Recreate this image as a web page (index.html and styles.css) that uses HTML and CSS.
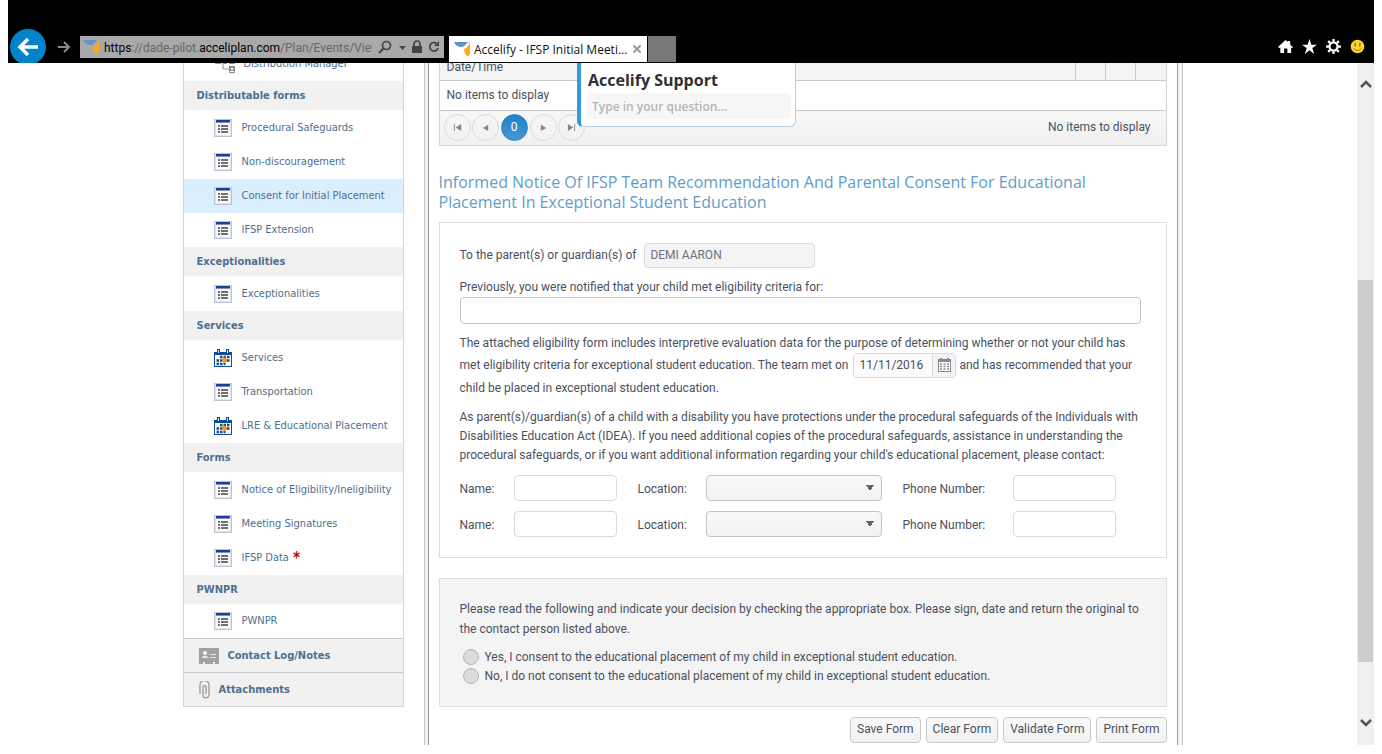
FILE: index.html
```html
<!DOCTYPE html>
<html lang="en">
<head>
<meta charset="utf-8">
<title>Accelify - IFSP Initial Meeting</title>
<link rel="stylesheet" href="styles.css">
</head>
<body>
<svg class="defs" aria-hidden="true">
  <symbol id="form" viewBox="0 0 18 18">
    <rect x=".5" y=".5" width="17" height="17" fill="#dfe4ef" stroke="#bcc4d6"/>
    <rect x="2" y="4" width="14" height="12" fill="#fbfbfb"/>
    <rect x="2" y="1" width="14" height="2.500" fill="#1b3f94"/>
    <path d="M4 7h2M4 10h2M4 13h2M7 7h7M7 10h7M7 13h7" stroke="#444" stroke-width="1.300"/>
  </symbol>
  <symbol id="cal" viewBox="0 0 18 18">
    <path d="M0 3h18v15H0z" fill="#0f4c91"/>
    <path d="M3 0h3v4H3zM12 0h3v4h-3z" fill="#0f4c91"/>
    <path d="M4 1h1v3H4zM13 1h1v3h-1z" fill="#cfe0f2"/>
    <path d="M1 6h16v11H1z" fill="#fff"/>
    <path d="M6 8h9.500M2.500 11.500h13M2.500 15h9" stroke="#0f4c91" stroke-width="2.400" stroke-dasharray="2.500 1"/>
    <circle cx="10.500" cy="11" r="2.600" fill="#f7941e"/>
  </symbol>
  <symbol id="brand" viewBox="0 0 16 16">
    <path d="M0 1h15c-3 1-3 4-7 5C4 6 1 4 0 1z" fill="#6495c8"/>
    <path d="M16 0v12c0 3-3 4-4 2-1-2-2-3-2-6 3-1 5-4 6-8z" fill="#fbab1f"/>
  </symbol>
</svg>
<div class="window">
  <header class="chrome">
    <button class="back" aria-label="Back"><svg viewBox="0 0 36 36"><circle cx="18" cy="18" r="18" fill="#0083c9"/><path d="M28 18H11M18 10l-8 8 8 8" fill="none" stroke="#fff" stroke-width="3.500"/></svg></button>
    <button class="forward" aria-label="Forward"><svg viewBox="0 0 14 12"><path d="M1 6h11M7 1l5 5-5 5" fill="none" stroke="#8b8b8b" stroke-width="2"/></svg></button>
    <div class="address">
      <svg class="fav" viewBox="0 0 16 16"><use href="#brand"/></svg>
      <span class="url"><b>https</b>://dade-pilot.<b>acceliplan.com</b>/Plan/Events/View</span>
      <button aria-label="Search"><svg width="14" height="14" viewBox="0 0 14 14"><circle cx="8.500" cy="5.500" r="4" fill="none" stroke="#444" stroke-width="1.700"/><path d="M5.500 8.500L1 13" stroke="#444" stroke-width="2.200"/></svg></button>
      <button aria-label="Show list"><svg width="8" height="14" viewBox="0 0 8 14"><path d="M1 6h7L4.500 10z" fill="#444"/></svg></button>
      <button aria-label="Security report"><svg width="10" height="14" viewBox="0 0 10 14"><path d="M0 6h10v7H0z" fill="#444"/><path d="M2 6V4a3 3 0 0 1 6 0v2" fill="none" stroke="#444" stroke-width="1.700"/></svg></button>
      <button aria-label="Refresh"><svg width="12" height="14" viewBox="0 0 12 14"><path d="M8.500 3.500A4.200 4.200 0 1 0 10 8" fill="none" stroke="#444" stroke-width="1.800"/><path d="M11 1v5H6z" fill="#444"/></svg></button>
    </div>
    <div class="tab">
      <svg class="fav" viewBox="0 0 16 16"><use href="#brand"/></svg>
      <span>Accelify - IFSP Initial Meeti...</span>
      <button aria-label="Close tab"><svg width="8" height="8" viewBox="0 0 8 8"><path d="M.5.5l7 7m0-7l-7 7" stroke="#9a9a9a" stroke-width="2"/></svg></button>
    </div>
    <button class="newtab" aria-label="New tab"></button>
    <div class="tools">
      <button aria-label="Home"><svg viewBox="0 0 16 16"><path d="M0 8.500L8 1l2.500 2.300V2H13v4l3 2.500-1 1L14 9v6h-4v-5H6.500v5H2.500V9L1 9.500z" fill="#fff"/></svg></button>
      <button aria-label="Favorites"><svg viewBox="0 0 16 16"><path d="M8 0l2 6h6l-5 3.700L13 16l-5-4-5 4 2-6.300L0 6h6z" fill="#fff"/></svg></button>
      <button aria-label="Tools"><svg viewBox="0 0 16 16"><circle cx="8" cy="8" r="4.300" fill="none" stroke="#fff" stroke-width="2.400"/><path d="M8 0v3M8 13v3M0 8h3M13 8h3M2.300 2.300l2 2M11.700 11.700l2 2M2.300 13.700l2-2M11.700 4.300l2-2" stroke="#fff" stroke-width="2.400"/></svg></button>
      <button aria-label="Send a smile"><svg viewBox="0 0 16 16"><circle cx="8" cy="8" r="7.300" fill="#fcd32f"/><path d="M5.500 4v4M10.500 4v4" stroke="#8a6d10" stroke-width="1.500"/><path d="M4 10c2 3 6 3 8 0" fill="none" stroke="#8a6d10"/></svg></button>
    </div>
  </header>

  <div class="viewport">
    <div class="page">
      <nav class="sidebar" aria-label="Plan sections">
        <a class="item cut" href="#"><svg class="org" viewBox="0 0 22 20"><path d="M4 7h8M9 7v8h6" fill="none" stroke="#999"/><path d="M1 4h6v6H1zM9 4h4v6H9zM15 4h6v6h-6zM15 12h6v7h-6z" fill="#8d8a8a"/><path d="M3 6h2v2H3zM17 6h2v2h-2zM17 14h2v2h-2zM16 17h4v1h-4z" fill="#fff"/></svg>Distribution Manager</a>
        <h2>Distributable forms</h2>
        <ul>
          <li><a class="item" href="#"><svg><use href="#form"/></svg>Procedural Safeguards</a></li>
          <li><a class="item" href="#"><svg><use href="#form"/></svg>Non-discouragement</a></li>
          <li><a class="item current" href="#"><svg><use href="#form"/></svg>Consent for Initial Placement</a></li>
          <li><a class="item" href="#"><svg><use href="#form"/></svg>IFSP Extension</a></li>
        </ul>
        <h2>Exceptionalities</h2>
        <ul>
          <li><a class="item" href="#"><svg><use href="#form"/></svg>Exceptionalities</a></li>
        </ul>
        <h2>Services</h2>
        <ul>
          <li><a class="item" href="#"><svg><use href="#cal"/></svg>Services</a></li>
          <li><a class="item" href="#"><svg><use href="#form"/></svg>Transportation</a></li>
          <li><a class="item" href="#"><svg><use href="#cal"/></svg>LRE &amp; Educational Placement</a></li>
        </ul>
        <h2>Forms</h2>
        <ul>
          <li><a class="item" href="#"><svg><use href="#form"/></svg>Notice of Eligibility/Ineligibility</a></li>
          <li><a class="item" href="#"><svg><use href="#form"/></svg>Meeting Signatures</a></li>
          <li><a class="item" href="#"><svg><use href="#form"/></svg>IFSP Data <span class="req">*</span></a></li>
        </ul>
        <h2>PWNPR</h2>
        <ul class="last">
          <li><a class="item" href="#"><svg><use href="#form"/></svg>PWNPR</a></li>
        </ul>
        <a class="section" href="#"><svg width="20" height="16" viewBox="0 0 20 16"><path d="M0 0h20v16h-4v-2h-2v2H6v-2H4v2H0z" fill="#a59f9f"/><circle cx="6" cy="5" r="2" fill="#fff"/><path d="M3 10c0-3 6-3 6 0zM11 6h6v1h-6zM11 9h6v1h-6z" fill="#e8e5e5"/></svg>Contact Log/Notes</a>
        <a class="section" href="#"><svg width="11" height="18" viewBox="0 0 11 18"><path d="M1 13V4a4 4 0 0 1 9 0v9c0 5-6 5-6 1V6c0-2 3-2 3 0v7" fill="none" stroke="#999" stroke-width="1.300"/></svg>Attachments</a>
      </nav>

      <main class="content">
        <div class="grid">
          <table>
            <thead><tr><th scope="col">Date/Time</th><th class="act"></th><th class="act"></th><th class="act"></th></tr></thead>
            <tbody><tr><td colspan="4">No items to display</td></tr></tbody>
          </table>
          <div class="pager">
            <button aria-label="First page"><svg viewBox="0 0 10 10"><path d="M1 1h1v8H1zM9 1v8L3 5z"/></svg></button>
            <button aria-label="Previous page"><svg viewBox="0 0 10 10"><path d="M8 2v7L2 5.500z"/></svg></button>
            <button class="on">0</button>
            <button aria-label="Next page"><svg viewBox="0 0 10 10"><path d="M2 2v7l6-3.500z"/></svg></button>
            <button aria-label="Last page"><svg viewBox="0 0 10 10"><path d="M8 1h1v8H8zM1 1v8l6-4z"/></svg></button>
            <span>No items to display</span>
          </div>
        </div>

        <h1>Informed Notice Of IFSP Team Recommendation And Parental Consent For Educational Placement In Exceptional Student Education</h1>

        <form>
          <section class="panel">
            <div class="line"><label for="child">To the parent(s) or guardian(s) of</label><input id="child" class="child" value="DEMI AARON" readonly></div>
            <label class="block" for="criteria">Previously, you were notified that your child met eligibility criteria for:</label>
            <input id="criteria" class="wide">
            <p class="team">The attached eligibility form includes interpretive evaluation data for the purpose of determining whether or not your child has<br>met eligibility criteria for exceptional student education. The team met on <span class="date"><input aria-label="Meeting date" value="11/11/2016"><button type="button" aria-label="Open calendar"><svg width="13" height="14" viewBox="0 0 13 14"><path d="M0 1h13v13H0z" fill="#858a96"/><path d="M2 0h2v2H2zM9 0h2v2H9z" fill="#858a96"/><path d="M1 4h11v9H1z" fill="#fff"/><path d="M2 6h9M2 8.500h9M2 11h9" stroke="#858a96" stroke-width="1.500" stroke-dasharray="2 1.500"/></svg></button></span> and has recommended that your<br>child be placed in exceptional student education.</p>
            <p class="rights">As parent(s)/guardian(s) of a child with a disability you have protections under the procedural safeguards of the Individuals with<br>Disabilities Education Act (IDEA). If you need additional copies of the procedural safeguards, assistance in understanding the<br>procedural safeguards, or if you want additional information regarding your child's educational placement, please contact:</p>
            <div class="contacts">
              <label for="n1">Name:</label><input id="n1"><label for="l1" class="gap">Location:</label><select id="l1"><option></option></select><label for="p1" class="gap">Phone Number:</label><input id="p1">
              <label for="n2">Name:</label><input id="n2"><label for="l2" class="gap">Location:</label><select id="l2"><option></option></select><label for="p2" class="gap">Phone Number:</label><input id="p2">
            </div>
          </section>

          <section class="panel decision">
            <p>Please read the following and indicate your decision by checking the appropriate box. Please sign, date and return the original to the contact person listed above.</p>
            <label><input type="radio" name="consent">Yes, I consent to the educational placement of my child in exceptional student education.</label>
            <label><input type="radio" name="consent">No, I do not consent to the educational placement of my child in exceptional student education.</label>
          </section>

          <div class="actions">
            <button type="button">Save Form</button>
            <button type="button">Clear Form</button>
            <button type="button">Validate Form</button>
            <button type="button">Print Form</button>
          </div>
        </form>
      </main>
    </div>

    <div class="scrollbar" aria-hidden="true">
      <svg viewBox="0 0 12 8"><path d="M1 7l5-5 5 5" fill="none" stroke="#555" stroke-width="2.500"/></svg>
      <div class="track"><div class="thumb"></div></div>
      <svg viewBox="0 0 12 8"><path d="M1 1l5 5 5-5" fill="none" stroke="#555" stroke-width="2.500"/></svg>
    </div>

    <aside class="support">
      <label for="ask">Accelify Support</label>
      <input id="ask" placeholder="Type in your question...">
    </aside>
  </div>
</div>
</body>
</html>
```
FILE: styles.css
```css
* { box-sizing: border-box; }
body {
  margin: 0;
  background: #fff;
  color: #4a5160;
  font: 12px/19px Roboto, "Liberation Sans", sans-serif;
}
button, input, select { margin: 0; font: inherit; color: inherit; }
button { padding: 0; border: 0; background: none; }
h1, h2, p, ul { margin: 0; padding: 0; }
ul { list-style: none; }
svg { display: block; flex: none; }
.defs { position: absolute; width: 0; height: 0; }

.window {
  display: flex;
  flex-direction: column;
  height: 100vh;
  padding: 0 8px 9px;
}

/* browser bar */
.chrome {
  display: flex;
  align-items: flex-end;
  flex: none;
  height: 63px;
  padding-left: 2px;
  overflow: hidden;
  background: #000;
}
.back { width: 36px; height: 34px; }
.back svg { width: 36px; height: 36px; }
.forward { margin: 0 9px 10px 11px; }
.forward svg { width: 14px; height: 12px; }
.address {
  display: flex;
  align-items: center;
  gap: 6px;
  width: 364px;
  height: 22px;
  margin: 0 5px 5px 0;
  padding: 0 4px 0 3px;
  background: #a9a9a9;
  color: #666;
}
.fav { width: 16px; height: 16px; }
.address .fav { margin-right: -1px; }
.url { flex: 1; padding-top: 2px; overflow: hidden; white-space: nowrap; }
.url b { color: #000; font-weight: 400; }
.tab {
  display: flex;
  align-items: center;
  width: 198px;
  height: 26px;
  margin: 0 1px 1px 0;
  padding: 0 6px 0 5px;
  background: #fff;
  color: #111;
  font-family: "Open Sans", sans-serif;
}
.tab span { flex: 1; margin-left: 4px; overflow: hidden; white-space: nowrap; }
.newtab { width: 28px; height: 26px; margin-bottom: 1px; background: #777; }
.tools { display: flex; gap: 9px; margin: 0 9px 9px auto; }
.tools svg { width: 15px; height: 15px; }

/* scrolled page */
.viewport { position: relative; display: flex; flex: 1; min-height: 0; overflow: hidden; }
.page { display: flex; align-items: flex-start; width: 1000px; margin: 0 auto; }

.sidebar {
  width: 221px;
  margin-right: 20px;
  border: 1px solid #d5d5d5;
  border-top: 0;
  font: 11px/16px "DejaVu Sans Condensed", "DejaVu Sans", sans-serif;
}
.sidebar h2, .section { color: #4d6f90; font-size: 11px; font-weight: 700; }
.sidebar h2 { height: 29px; padding: 7px 13px 0; background: #f1f1f1; line-height: 16px; }
.sidebar ul { padding-top: 1px; }
.sidebar .last { padding-top: 0; }
.item {
  display: flex;
  align-items: center;
  height: 34px;
  padding-left: 30px;
  color: #4d6f90;
  text-decoration: none;
  white-space: nowrap;
}
.item svg { width: 18px; height: 18px; margin-right: 10px; }
.item .org { width: 22px; height: 20px; margin-right: 8px; }
.cut { margin-top: -16px; }
.current { background: #daeefe; }
.req { margin-left: 4px; color: #c00; font-size: 15px; font-weight: 700; }
.section {
  display: flex;
  align-items: center;
  gap: 9px;
  height: 34px;
  padding-left: 15px;
  border-top: 1px solid #c8c8cc;
  background: #f1f1f1;
  text-decoration: none;
}

.content {
  flex: 1;
  min-width: 0;
  height: 720px;
  padding: 0 10px;
  border-right: 1px solid #999ba0;
  border-left: 1px solid #999ba0;
  box-shadow: 4px 0 #f4f4f6, 5px 0 #c4c6cb, -3px 0 #f2f2f6, -4px 0 #c4c6cb;
}
.page .content { margin: 0 5px 0 4px; }

.grid { border: 1px solid #d5d5d5; border-top: 0; }
.grid table { width: 100%; margin-top: -13px; border-collapse: collapse; table-layout: fixed; }
.grid th, .grid td { height: 30px; padding: 0 7px; border-bottom: 1px solid #c9c9cc; text-align: left; font-weight: 400; }
.grid th { padding-top: 5px; background: #f4f4f4; }
.grid .act { width: 30px; padding: 0; border-left: 1px solid #c9c9cc; }
.pager {
  display: flex;
  align-items: center;
  gap: 1px;
  height: 34px;
  padding: 0 15px 0 4px;
  background: linear-gradient(#f8f8f8, #f0f0f0);
}
.pager button {
  display: flex;
  align-items: center;
  justify-content: center;
  width: 27px;
  height: 27px;
  border: 1px solid #dadadc;
  border-radius: 50%;
}
.pager svg { width: 9px; height: 9px; fill: #80858f; }
.pager .on { margin: 0 1px; border-color: #2184c8; background: linear-gradient(#1e82c8, #4797d3); color: #fff; }
.pager span { margin-left: auto; }

h1 {
  margin: 26px 0 10px;
  color: #639cc9;
  font: 400 16px/20px "Open Sans", sans-serif;
}
.panel { padding: 20px; border: 1px solid #dedede; }
.panel input, .panel select {
  width: 100%;
  height: 26px;
  padding: 0 5px;
  border: 1px solid #dadadc;
  border-radius: 4px;
  background: #fff;
}
.line { display: flex; align-items: center; gap: 8px; height: 25px; margin-bottom: 10px; }
.panel .child { width: 171px; height: 25px; background: #f4f4f4; color: #6a7180; }
.block { display: block; }
.panel .wide { display: block; width: calc(100% - 5px); height: 27px; border-color: #c5c5c8; }
.team, .rights { white-space: nowrap; }
.team { margin: 9px 0 10px; line-height: 20px; }
.date {
  display: inline-flex;
  width: 103px;
  height: 25px;
  margin-left: 2px;
  vertical-align: middle;
  border: 1px solid #dadadc;
  border-radius: 4px;
  overflow: hidden;
}
.date input { flex: 1; min-width: 0; height: 23px; border: 0; border-radius: 0; background: #fbfbfb; }
.date button { display: flex; align-items: center; justify-content: center; width: 23px; border-left: 1px solid #dadadc; background: #f3f3f3; }
.contacts {
  display: grid;
  grid-template-columns: 54px 103px 89px 176px 131px 103px;
  row-gap: 10px;
  align-items: center;
  margin-top: 10px;
}
.contacts label { padding-top: 4px; }
.contacts .gap { padding-left: 21px; }
.panel select {
  appearance: none;
  border-color: #c5c5c8;
  background:
    linear-gradient(to bottom right, #5c6270 50%, transparent 51%) right 7px center / 4px 6px no-repeat,
    linear-gradient(to bottom left, #5c6270 50%, transparent 51%) right 11px center / 4px 6px no-repeat,
    linear-gradient(#f9f9f9, #f2f2f2);
}
.decision { margin-top: 20px; background: #f4f4f4; }
.decision p { margin-bottom: 9px; line-height: 20px; }
.decision label { display: flex; align-items: center; gap: 6px; padding-left: 3px; }
.panel input[type="radio"] {
  appearance: none;
  width: 16px;
  height: 16px;
  padding: 0;
  border: 1px solid #b5b5b5;
  border-radius: 50%;
  background: #dcdcdc;
}
.actions { display: flex; justify-content: flex-end; gap: 5px; margin-top: 10px; }
.actions button {
  height: 26px;
  padding: 0 6px;
  border: 1px solid #c9c9cc;
  border-radius: 4px;
  background: linear-gradient(#f9f9f9, #f1f1f1);
}

.scrollbar {
  display: flex;
  flex-direction: column;
  align-items: center;
  flex: none;
  width: 17px;
  padding: 17px 0 18px;
  background: #f0f0f0;
}
.scrollbar svg { width: 12px; height: 8px; }
.track { display: grid; grid-template-rows: 192fr 381fr 57fr; flex: 1; align-self: stretch; padding: 0 1px; }
.thumb { grid-row: 2; background: #cdcdcd; }

.support {
  position: absolute;
  top: 0;
  left: 569px;
  width: 219px;
  padding: 8px 4px 7px 6px;
  border: solid #b9cfdf;
  border-width: 0 1px 1px 0;
  border-left: 4px solid #3498db;
  border-radius: 0 0 6px 6px;
  background: #fff;
}
.support label { display: block; padding-left: 1px; color: #2f3033; font: 700 16px/19px "Open Sans", sans-serif; }
.support input { display: block; width: 100%; height: 26px; margin-top: 3px; padding: 0 5px; border: 0; border-radius: 4px; background: #f7f7f7; font: 600 12px "Open Sans", sans-serif; }
.support input::placeholder { color: #b5b5b8; opacity: 1; }
```
